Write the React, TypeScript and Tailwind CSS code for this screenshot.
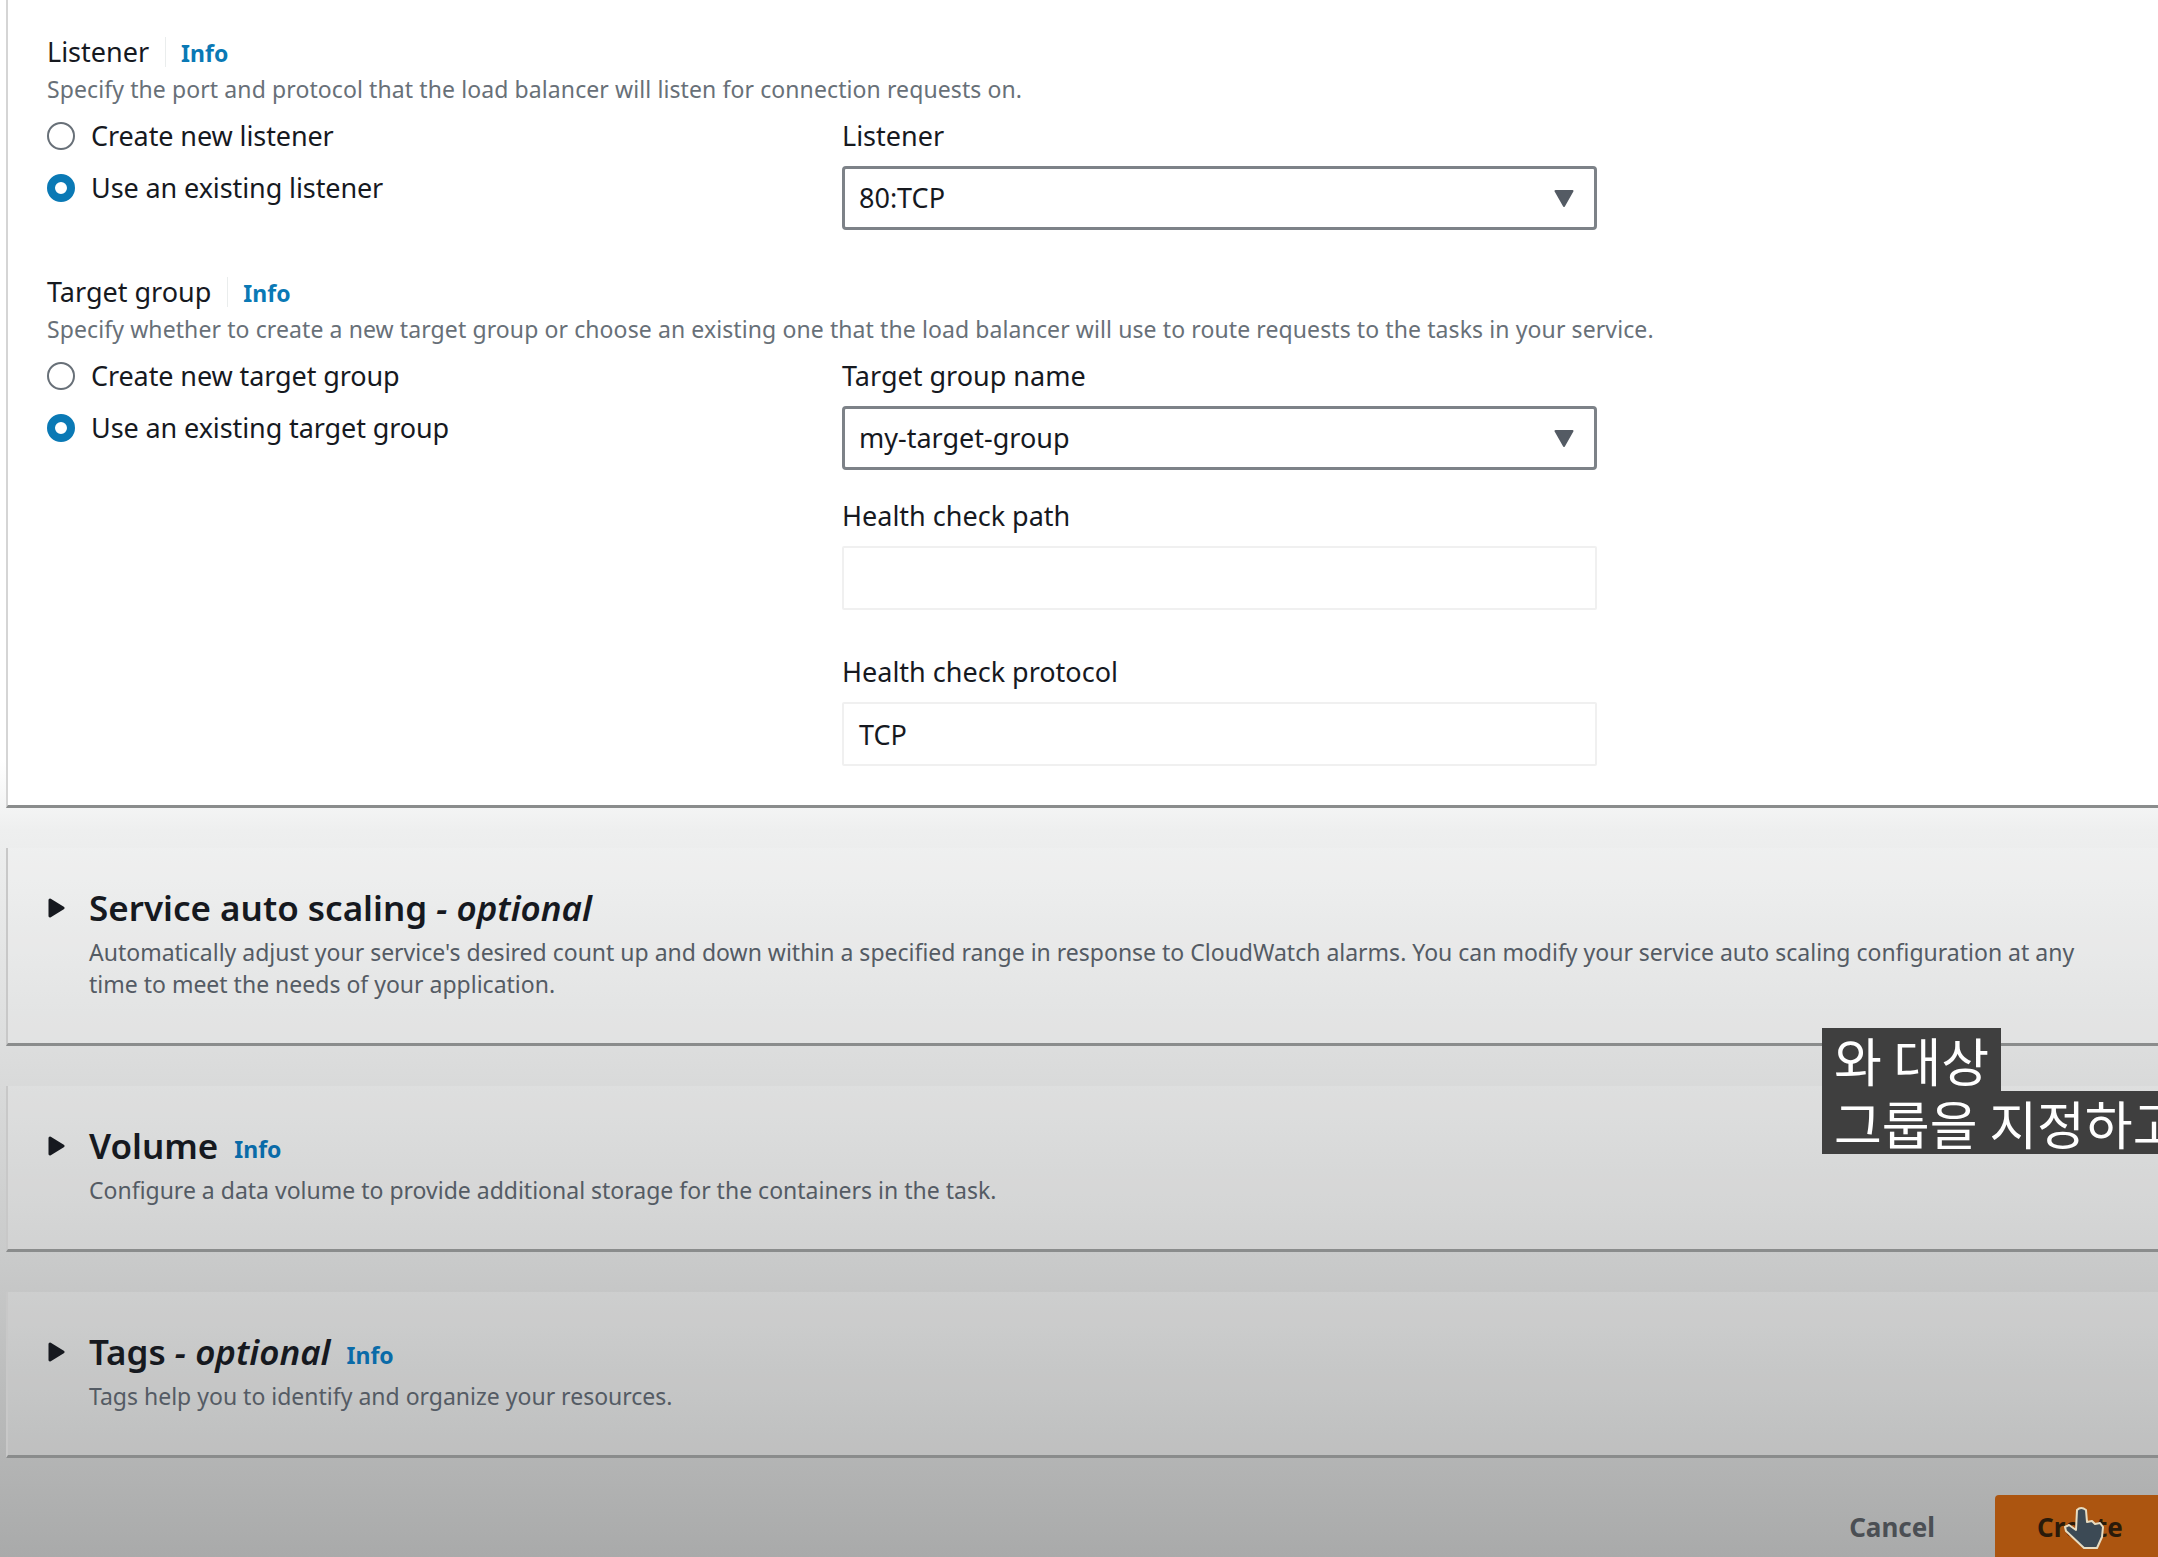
const font = "font-['Noto_Sans','Liberation_Sans',sans-serif]";

function Radio({ checked, label }: { checked?: boolean; label: string }) {
  return (
    <div className="flex items-center h-[52px]">
      {checked ? (
        <span className="w-[28px] h-[28px] rounded-full border-[8px] border-[#0a79b5] bg-white shrink-0" />
      ) : (
        <span className="w-[28px] h-[28px] rounded-full border-2 border-[#687078] bg-white shrink-0" />
      )}
      <span className="ml-[16px] text-[27px] tracking-[-0.1px] text-[#16191f]">{label}</span>
    </div>
  );
}

function Caret() {
  return (
    <svg width="20" height="17" viewBox="0 0 20 17" className="shrink-0">
      <path d="M1.5 1h17L10 16z" fill="#545b64" stroke="#545b64" strokeWidth="2" strokeLinejoin="round" />
    </svg>
  );
}

function Select({ value }: { value: string }) {
  return (
    <div className="h-[64px] w-[755px] border-[3px] border-[#7d8288] rounded-[4px] bg-white flex items-center justify-between pl-[14px] pr-[20px]">
      <span className="text-[27px] text-[#16191f]">{value}</span>
      <Caret />
    </div>
  );
}

function Input({ value }: { value?: string }) {
  return (
    <div className="h-[64px] w-[755px] border-2 border-[#f0f0f0] rounded-[2px] bg-white flex items-center pl-[15px] pt-[2px]">
      <span className="text-[27px] text-[#16191f]">{value}</span>
    </div>
  );
}

function Heading({ title }: { title: string }) {
  return (
    <div className="flex items-center h-[36px]">
      <span className="text-[27px] text-[#16191f]">{title}</span>
      <span className="ml-[16px] h-[30px] w-px bg-[#eaeded]" />
      <span className="ml-[15px] mt-[2px] text-[23px] font-bold text-[#0a79b5]">Info</span>
    </div>
  );
}

function Fieldset(props: {
  title: string;
  desc: string;
  first: string;
  second: string;
  children: React.ReactNode;
}) {
  return (
    <section>
      <Heading title={props.title} />
      <p className="mt-[3px] h-[32px] leading-[32px] text-[23px] tracking-[0.1px] text-[#687078] whitespace-nowrap">{props.desc}</p>
      <div className="mt-[5px] flex">
        <div className="w-[795px] shrink-0">
          <Radio label={props.first} />
          <Radio checked label={props.second} />
        </div>
        <div>{props.children}</div>
      </div>
    </section>
  );
}

function Label({ children }: { children: React.ReactNode }) {
  return <div className="h-[52px] leading-[52px] mb-[4px] text-[27px] text-[#16191f]">{children}</div>;
}

function Card({ title, optional, info, children }: { title: string; optional?: boolean; info?: boolean; children: React.ReactNode }) {
  return (
    <section className="ml-[6px] border-b-[3px] border-l-2 border-b-[#8a8c8c] border-l-[#c8c8c8] bg-white/15 mt-[40px] pl-[40px] pr-[40px] pt-[40px] pb-[43px]">
      <div className="flex items-center h-[40px]">
        <svg width="17" height="20" viewBox="0 0 17 20" className="shrink-0">
          <path d="M2 2l13 8L2 18z" fill="#16191f" stroke="#16191f" strokeWidth="3" strokeLinejoin="round" />
        </svg>
        <h2 className="ml-[24px] text-[35px] leading-[40px] font-semibold text-[#16191f] whitespace-nowrap">
          {title}
          {optional && <i className="font-semibold"> - optional</i>}
        </h2>
        {info && <span className="ml-[16px] mt-[6px] text-[23px] font-bold text-[#0a6ba8]">Info</span>}
      </div>
      <p className="ml-[41px] mt-[8px] text-[23px] leading-[32px] text-[#545b64]">{children}</p>
    </section>
  );
}

export default function App() {
  return (
    <div className={`${font} relative w-full h-[1557px] overflow-hidden bg-[linear-gradient(180deg,#ffffff_0px,#ffffff_760px,#eeefef_830px,#dcdddd_1050px,#c9caca_1260px,#a9aaaa_1557px)]`}>
      <div className="ml-[6px] border-l-2 border-l-[#d5d5d5] border-b-[3px] border-b-[#8a8c8c] bg-white h-[808px] pl-[39px] pt-[34px] flex flex-col">
        <Fieldset
          title="Listener"
          desc="Specify the port and protocol that the load balancer will listen for connection requests on."
          first="Create new listener"
          second="Use an existing listener"
        >
          <Label>Listener</Label>
          <Select value="80:TCP" />
        </Fieldset>
        <div className="mt-[44px]">
          <Fieldset
            title="Target group"
            desc="Specify whether to create a new target group or choose an existing one that the load balancer will use to route requests to the tasks in your service."
            first="Create new target group"
            second="Use an existing target group"
          >
            <Label>Target group name</Label>
            <Select value="my-target-group" />
            <div className="mt-[20px]">
              <Label>Health check path</Label>
              <Input />
            </div>
            <div className="mt-[36px]">
              <Label>Health check protocol</Label>
              <Input value="TCP" />
            </div>
          </Fieldset>
        </div>
      </div>

      <Card title="Service auto scaling" optional>
        Automatically adjust your service's desired count up and down within a specified range in response to CloudWatch alarms. You can modify your service auto scaling configuration at any time to meet the needs of your application.
      </Card>
      <Card title="Volume" info>
        Configure a data volume to provide additional storage for the containers in the task.
      </Card>
      <Card title="Tags" optional info>
        Tags help you to identify and organize your resources.
      </Card>

      <div className="mt-[37px] flex justify-end items-start">
        <button className="mt-[13px] mr-[60px] text-[26px] font-bold text-[#4b4f54]">Cancel</button>
        <button className="w-[163px] h-[64px] rounded-tl-[4px] bg-[#ac5510] pl-[42px] text-left text-[26px] font-bold text-[#2a1a0a]">Create</button>
      </div>

      <svg width="42" height="44" viewBox="0 0 42 44" className="absolute left-[2063px] top-[1506px]">
        <path
          d="M14 4q4-4 9 0L24 16L29 15L32 18L37 17L40 21L39 31L34 42L21 42L3 25L2 21L6 19L13 24Z"
          fill="#3c4a55"
          stroke="#e8dcc0"
          strokeWidth="2"
          strokeLinejoin="round"
        />
      </svg>

      <div className="absolute left-[1822px] top-[1028px] font-['Noto_Sans_CJK_KR',sans-serif] text-[52px] leading-[63px] text-white whitespace-nowrap">
        <div className="w-fit bg-[#3f3f3f] pl-[12px] pr-[12px]">와 대상</div>
        <div className="w-fit bg-[#3f3f3f] pl-[12px] pr-[12px]">그룹을 지정하고</div>
      </div>
    </div>
  );
}
